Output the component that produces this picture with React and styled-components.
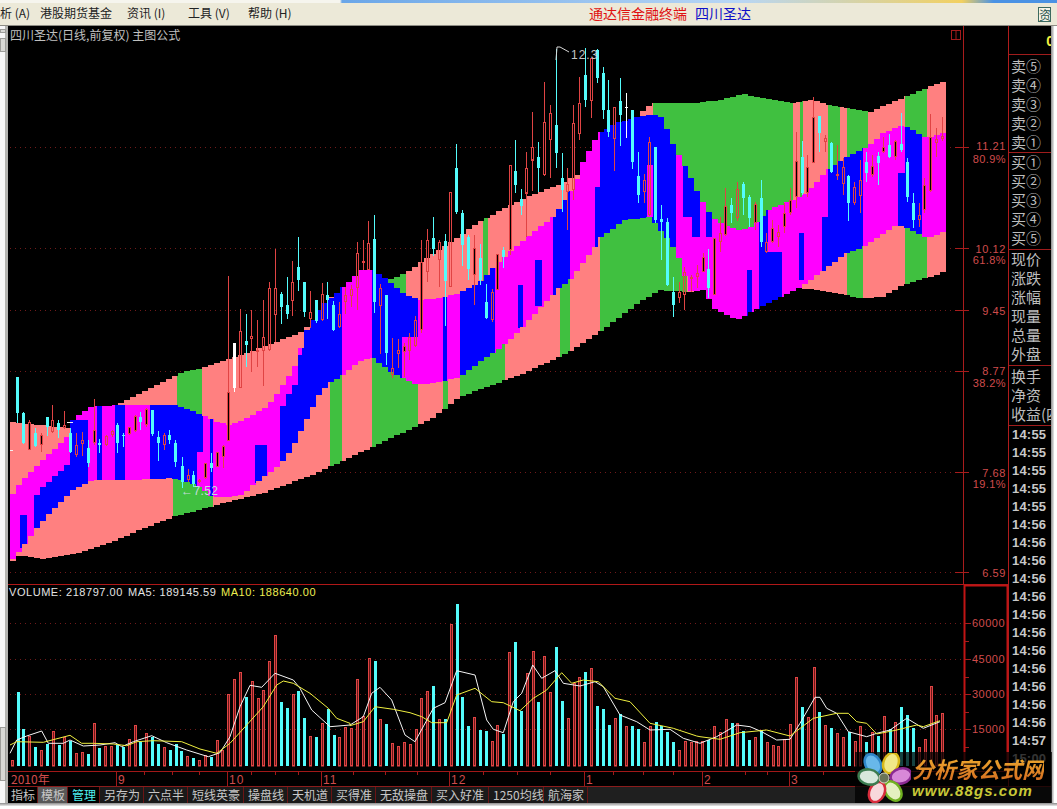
import React from 'react'
import styled, { createGlobalStyle } from 'styled-components'

const CJK = '"Noto Sans CJK SC", "Liberation Sans", sans-serif'
const LATIN = '"Liberation Sans", "Noto Sans CJK SC", sans-serif'

const SALMON = '#ff8080'
const GREEN = '#40c040'
const BLUE = '#0000ff'
const MAGENTA = '#ff00ff'
const RED = '#e04444'
const CYAN = '#54fcfc'
const AXIS = '#a81c1c'
const LABEL = '#d04c4c'

const GlobalStyle = createGlobalStyle`
    html, body {
        margin: 0;
        padding: 0;
        background: #fff;
        overflow: hidden;
    }
`

const Page = styled.div`
    width: 1057px;
    height: 809px;
    display: flex;
    flex-direction: column;
    font-family: ${CJK};
    overflow: hidden;
`

const TitleStrip = styled.div`
    height: 3px;
    background: linear-gradient(90deg, #f6f5ee 0, #f6f5ee 340px, #6aa6e8 342px, #b8d6f4 70%, #f2d060 91%, #4a92e4 94%);
`

const MenuBar = styled.div`
    height: 23px;
    flex: none;
    display: flex;
    align-items: center;
    position: relative;
    box-sizing: border-box;
    padding-bottom: 3px;
    background: #ece9d8;
    border-bottom: 1px solid #8d8c84;
    font-size: 12px;
    color: #222;
`

const MenuItem = styled.span`
    position: absolute;
    left: ${props => props.left}px;
    white-space: nowrap;
`

const Headline = styled.div`
    position: absolute;
    left: 589px;
    display: flex;
    gap: 8px;
    font-size: 14px;
`

const HeadlinePart = styled.span`
    color: ${props => props.color};
`

const InfoButton = styled.div`
    position: absolute;
    left: 1038px;
    top: 4px;
    width: 13px;
    height: 15px;
    border: 1px solid #3c6a60;
    box-sizing: border-box;
    overflow: hidden;
    font-size: 12px;
    line-height: 13px;
    color: #245048;
    background: #f6f4e8;
`

const Workspace = styled.div`
    flex: none;
    height: 777px;
    display: flex;
`

const LeftRail = styled.div`
    width: 5px;
    flex: none;
    background: #f7f7f7;
    border-right: 3px solid #b4b4b0;
    display: flex;
    flex-direction: column;
    align-items: flex-start;
    gap: 3px;
    padding-top: 3px;
`

const RailButton = styled.div`
    width: 6px;
    height: ${props => props.h}px;
    margin-top: ${props => props.top || 0}px;
    background: #d8d8d4;
    border: 1px solid #9c9c98;
    box-sizing: border-box;
`

const RightRail = styled.div`
    width: 3px;
    flex: none;
    background: linear-gradient(90deg, #8c8c8c, #e8e8e8);
`

const Terminal = styled.div`
    width: 1043px;
    flex: none;
    display: flex;
    flex-direction: column;
    background: #000;
    position: relative;
`

const Upper = styled.div`
    height: 760px;
    display: flex;
`

const ChartColumn = styled.div`
    width: 1000px;
    flex: none;
    display: flex;
    flex-direction: column;
`

const ChartSvg = styled.svg`
    display: block;
    flex: none;
`

const InfoColumn = styled.div`
    width: 43px;
    flex: none;
    box-sizing: border-box;
    border-left: 1px solid #b01c1c;
    overflow: hidden;
    color: #bdbdbd;
`

const LastPrice = styled.div`
    height: 28px;
    border-bottom: 1px solid #a01c1c;
    text-align: right;
    font: bold 14px/30px ${LATIN};
    color: #f4f040;
    margin-right: -3px;
`

const QuoteGroup = styled.div`
    padding: ${props => props.pad || '0'};
    border-bottom: 1px solid #a01c1c;
`

const QuoteRow = styled.div`
    height: 19px;
    line-height: 17px;
    font-size: 15px;
    padding-left: 2px;
    white-space: nowrap;
`

const TimeRow = styled.div`
    height: 18px;
    line-height: 18px;
    font: bold 13px/18px ${LATIN};
    padding-left: 3px;
    letter-spacing: .2px;
    color: #c8c8c8;
`

const TabBar = styled.div`
    height: 17px;
    flex: none;
    display: flex;
    background: #1f1f1f;
    border-top: 1px solid #8a1c1c;
    box-sizing: border-box;
    font-size: 12px;
    line-height: 16px;
`

const Tab = styled.div`
    padding: 0 ${props => props.narrow ? 3 : 4}px;
    flex: none;
    color: ${props => props.active ? '#4ff0f0' : '#c8c8c8'};
    background: ${props => props.muted ? '#585858' : props.dark ? '#000' : '#1a1a1a'};
    border-right: 1px solid #6a1414;
    box-sizing: border-box;
    width: ${props => props.w}px;
    white-space: nowrap;
    text-align: center;
`

const BottomEdge = styled.div`
    height: 3px;
    background: linear-gradient(180deg, #8c8c8c, #e8e8e8);
`

const Watermark = styled.div`
    position: absolute;
    left: 847px;
    top: 726px;
    width: 197px;
    height: 51px;
    background: rgba(0, 0, 0, .74);
    display: flex;
    align-items: center;
    padding-left: 2px;
    box-sizing: border-box;
    gap: 1px;
`

const BrandText = styled.div`
    display: flex;
    flex-direction: column;
    font-style: italic;
    font-weight: bold;
`

const BrandName = styled.div`
    font-size: 22px;
    line-height: 27px;
    background: linear-gradient(180deg, #f0b030, #d46a20);
    -webkit-background-clip: text;
    background-clip: text;
    color: transparent;
    white-space: nowrap;
`

const BrandUrl = styled.div`
    font: italic bold 15px/18px ${LATIN};
    letter-spacing: 1.1px;
    color: #c8c838;
`

const interp = (points, x) => {
    if (x <= points[0][0]) return points[0][1]
    for (let i = 1; i < points.length; i++) {
        if (x <= points[i][0]) {
            const [x0, y0] = points[i - 1]
            const [x1, y1] = points[i]
            return y0 + (y1 - y0) * (x - x0) / (x1 - x0)
        }
    }
    return points[points.length - 1][1]
}

const TOP = [[10, 422], [67, 428], [73, 420], [90, 407], [117, 405], [180, 373], [202, 368], [233, 358], [300, 333], [312, 323], [320, 308], [330, 298], [343, 290], [353, 278], [360, 270], [373, 270], [385, 278], [388, 280], [406, 273], [443, 247], [483, 220], [520, 200], [563, 183], [580, 173], [583, 162], [595, 140], [600, 133], [617, 123], [637, 117], [647, 107], [653, 103], [693, 103], [720, 100], [743, 94], [773, 100], [793, 103], [813, 100], [830, 105], [870, 112], [903, 98], [927, 88], [947, 80]]
const UPPER = [[10, 498], [20, 483], [43, 460], [67, 437], [69, 428], [73, 420], [90, 407], [117, 405], [177, 405], [202, 415], [217, 422], [230, 425], [243, 420], [267, 407], [287, 380], [300, 357], [302, 338], [320, 308], [353, 278], [360, 270], [373, 270], [385, 278], [388, 280], [406, 295], [420, 300], [440, 298], [460, 293], [483, 280], [493, 268], [520, 243], [553, 217], [570, 193], [580, 173], [583, 162], [595, 140], [600, 133], [617, 123], [637, 117], [648, 115], [658, 115], [663, 118], [672, 142], [687, 170], [700, 197], [712, 217], [720, 223], [737, 230], [753, 227], [768, 210], [793, 200], [807, 193], [827, 170], [847, 157], [870, 145], [883, 133], [903, 125], [927, 138], [947, 132]]
const LOWER = [[10, 563], [22, 548], [33, 533], [50, 513], [73, 490], [93, 480], [133, 480], [173, 478], [197, 485], [213, 497], [227, 497], [243, 495], [253, 485], [280, 465], [293, 447], [313, 407], [320, 393], [330, 383], [340, 377], [357, 363], [372, 357], [378, 362], [393, 373], [417, 385], [440, 382], [460, 377], [487, 357], [507, 343], [520, 330], [560, 287], [570, 280], [593, 250], [600, 238], [625, 220], [650, 217], [670, 242], [680, 260], [690, 291], [705, 290], [713, 308], [737, 320], [750, 313], [780, 297], [800, 288], [847, 253], [863, 247], [897, 225], [905, 227], [927, 238], [947, 231]]
const BOTTOM = [[10, 563], [20, 555], [43, 559], [57, 557], [83, 552], [117, 540], [140, 530], [173, 517], [213, 506], [267, 492], [317, 473], [430, 420], [460, 397], [487, 387], [520, 375], [570, 352], [607, 327], [640, 302], [660, 290], [687, 292], [705, 290], [713, 308], [737, 320], [750, 313], [780, 297], [800, 288], [820, 290], [860, 298], [883, 297], [903, 285], [930, 277], [947, 271]]

const COL_W = 6
const COLS = Array.from({ length: 156 }, (_, i) => 10 + i * COL_W)

const bandPath = (a, b) => {
    const up = COLS.map(x => `L${x} ${Math.round(interp(a, x + 3))}H${x + COL_W}`).join('')
    const down = [...COLS].reverse().map(x => `L${x + COL_W} ${Math.round(interp(b, x + 3))}H${x}`).join('')
    return `M${up.slice(1)}${down}Z`
}

const TOP_GREEN = [[177, 202], [388, 406], [483, 488], [653, 793], [800, 803], [828, 840], [847, 868], [905, 927]]
const LOW_GREEN = [[173, 213], [330, 342], [372, 418], [443, 448], [460, 505], [560, 570], [600, 687], [847, 863], [905, 927]]

// blue runs inside the middle band, the rest of it is magenta
const MID_BLUE = [[97, 102], [115, 125], [150, 203], [210, 213], [302, 342], [372, 402], [443, 447], [460, 495], [553, 570], [595, 676], [759, 782], [822, 863], [898, 922]]

const PATCHES = [
    [20, 27, 515, 548, BLUE], [197, 203, 452, 600, MAGENTA], [255, 267, 445, 483, BLUE],
    [402, 418, 0, 337, BLUE], [518, 523, 285, 328, BLUE], [535, 542, 260, 306, BLUE],
    [595, 600, 0, 187, MAGENTA], [647, 653, 165, 217, MAGENTA], [683, 692, 0, 217, BLUE],
    [692, 700, 0, 237, BLUE], [706, 712, 0, 237, BLUE], [747, 752, 270, 317, BLUE],
    [768, 782, 0, 252, MAGENTA], [799, 804, 233, 280, BLUE], [822, 828, 0, 217, MAGENTA],
    [898, 905, 0, 173, MAGENTA],
]

const DIAGONALS = [
    { from: 33, to: 90, line: [[33, 500], [43, 487], [67, 465], [68, 420]] },
    { from: 278, to: 302, line: [[278, 418], [287, 397], [295, 385], [302, 350]] },
]

const diagonalPath = ({ from, to, line }) => {
    const cols = COLS.filter(x => x + 3 >= from && x + 3 < to)
    return cols.map(x => `M${x} ${Math.round(interp(line, x + 3))}H${x + COL_W}V600H${x}Z`).join('')
}

const CANDLES = [
    { x0: 0, y0: 340, rows: [
        [52, 'c', 110, 110, 220, 250], [70, 'c', 215, 220, 310, 312], [88, 'd', 240, 245, 330, 330], [106, 'c', 265, 280, 318, 320], [124, 'd', 280, 285, 315, 335], [142, 'c', 232, 232, 262, 288], [157, 'r', 195, 240, 275, 280], [175, 'c', 240, 250, 270, 295], [193, 'r', 213, 255, 265, 268], [211, 'c', 265, 280, 335, 340], [229, 'r', 280, 315, 345, 350], [247, 'r', 275, 300, 312, 348], [265, 'c', 300, 325, 370, 380], [281, 'd', 178, 270, 310, 315], [298, 'c', 298, 310, 315, 340], [317, 'r', 285, 288, 315, 318], [335, 'r', 270, 272, 285, 290], [352, 'c', 248, 255, 310, 340], [370, 'c', 280, 285, 288, 320], [386, 'd', 260, 262, 282, 285], [404, 'd', 225, 228, 272, 275], [421, 'c', 215, 232, 245, 270], [439, 'd', 205, 208, 255, 260], [457, 'c', 210, 210, 283, 288], [475, 'c', 272, 290, 310, 362], [493, 'r', 280, 285, 315, 330], [508, 'c', 270, 285, 300, 312], [526, 'c', 300, 310, 365, 382], [545, 'c', 352, 378, 425, 445], [563, 'r', 388, 405, 420, 425], [580, 'c', 392, 405, 432, 440], [598, 'r', 418, 420, 425, 428], [616, 'd', 370, 370, 415, 418], [632, 'c', 338, 368, 385, 395], [650, 'd', 335, 337, 380, 380], [668, 'd', 315, 318, 352, 385],
    ] },
    { x0: 210, y0: 225, rows: [
        [55, 'd', 152, 500, 648, 648], [73, 'w', 355, 355, 490, 500], [91, 'r', 252, 317, 488, 490], [109, 'c', 268, 348, 360, 425], [124, 'r', 255, 332, 342, 440], [142, 'r', 285, 375, 380, 425], [160, 'r', 225, 335, 378, 482], [178, 'r', 170, 190, 375, 378], [196, 'r', 72, 190, 270, 350], [214, 'c', 200, 207, 245, 297], [232, 'c', 155, 240, 268, 282], [247, 'r', 108, 172, 228, 272], [265, 'c', 36, 125, 165, 197], [283, 'c', 170, 172, 262, 276], [301, 'r', 198, 260, 282, 310], [319, 'c', 225, 225, 288, 293], [337, 'r', 175, 208, 285, 287], [352, 'c', 172, 210, 225, 282], [370, 'c', 228, 240, 315, 318], [388, 'r', 230, 268, 305, 310], [406, 'r', 186, 210, 230, 268], [424, 'r', 180, 192, 212, 245], [442, 'r', 52, 85, 190, 255], [460, 'r', 45, 108, 115, 135], [475, 'r', -12, 55, 135, 135], [493, 'c', -30, 42, 230, 265], [511, 'r', 178, 190, 243, 388], [529, 'c', 210, 210, 385, 420],
    ] },
    { x0: 320, y0: 180, rows: [
        [217, 'r', 475, 565, 585, 595], [235, 'r', 478, 510, 522, 565], [253, 'd', 490, 497, 515, 590], [268, 'r', 460, 472, 512, 540], [286, 'r', 408, 420, 498, 500], [304, 'd', 180, 245, 450, 460], [322, 'r', 148, 180, 275, 305], [340, 'c', 110, 175, 208, 228], [358, 'r', 180, 185, 240, 320], [376, 'c', 163, 183, 303, 438], [391, 'r', 36, 36, 320, 320], [409, 'c', -108, -36, 96, 101], [427, 'c', 90, 99, 195, 258], [445, 'c', 165, 170, 268, 300], [463, 'd', 165, 205, 285, 375], [481, 'c', 192, 235, 300, 315], [499, 'c', 312, 365, 415, 418], [515, 'r', 328, 335, 420, 425], [531, 'd', 222, 222, 330, 330], [549, 'c', 201, 210, 231, 264], [569, 'd', -45, -45, 210, 225], [586, 'c', -120, -27, 15, 39], [604, 'c', 27, 57, 78, 105], [619, 'r', -84, -36, 42, 159], [637, 'r', -204, -99, -60, 33], [655, 'c', -114, -69, -36, 36],
    ] },
    { x0: 520, y0: 30, rows: [
        [127, 'c', 368, 445, 480, 545], [142, 'r', 415, 462, 485, 600], [160, 'r', 225, 280, 480, 510], [178, 'r', 140, 220, 312, 330], [196, 'c', 55, 135, 210, 232], [214, 'r', 85, 85, 212, 265], [232, 'c', 58, 60, 145, 160], [250, 'c', 112, 130, 240, 268], [265, 'c', 150, 240, 305, 320], [283, 'r', 230, 232, 328, 422], [301, 'c', 145, 212, 255, 348], [319, 'w', 190, 232, 235, 325], [337, 'c', 240, 240, 395, 418], [355, 'c', 365, 438, 495, 520], [373, 'r', 432, 450, 485, 518], [388, 'r', 320, 335, 555, 558], [406, 'c', 352, 352, 570, 578], [424, 'c', 525, 568, 575, 690], [442, 'c', 565, 575, 765, 768], [460, 'c', 742, 785, 825, 860], [478, 'r', 755, 785, 805, 820], [493, 'r', 710, 725, 795, 840], [512, 'r', 735, 740, 745, 785], [530, 'r', 705, 730, 742, 775], [548, 'd', 670, 680, 725, 725], [565, 'c', 658, 718, 775, 805], [583, 'd', 625, 625, 795, 795], [601, 'r', 560, 608, 637, 665], [616, 'd', 475, 528, 615, 618], [634, 'c', 505, 525, 548, 580], [652, 'r', 455, 478, 565, 572], [670, 'c', 455, 462, 505, 555], [688, 'c', 495, 500, 565, 590], [706, 'd', 515, 522, 580, 600], [724, 'c', 450, 505, 635, 650], [739, 'r', 610, 635, 665, 670], [757, 'd', 570, 593, 635, 640], [775, 'r', 585, 605, 620, 650], [793, 'd', 520, 550, 590, 610], [811, 'd', 475, 510, 550, 555], [829, 'd', 305, 392, 500, 535], [847, 'c', 332, 382, 490, 495], [862, 'd', 375, 410, 490, 500], [880, 'd', 200, 260, 400, 400], [898, 'c', 258, 258, 310, 365], [916, 'r', 315, 325, 335, 365], [934, 'c', 335, 340, 425, 430], [952, 'r', 345, 432, 438, 450], [970, 'r', 385, 410, 462, 495], [985, 'c', 435, 438, 520, 572], [1003, 'r', 455, 472, 520, 525], [1021, 'r', 390, 450, 497, 550], [1039, 'c', 365, 395, 430, 455], [1057, 'd', 375, 408, 435, 440], [1075, 'c', 365, 378, 400, 465], [1090, 'd', 320, 350, 365, 368], [1108, 'c', 312, 345, 380, 385], [1126, 'd', 330, 332, 380, 390], [1144, 'c', 248, 342, 360, 365], [1162, 'c', 385, 395, 500, 515], [1180, 'c', 490, 520, 570, 595], [1198, 'r', 520, 555, 570, 590], [1213, 'd', 445, 465, 540, 550], [1231, 'd', 252, 322, 482, 485], [1249, 'r', 295, 328, 340, 380], [1267, 'r', 262, 318, 328, 332],
    ] },
]

// rows are read in 3x coordinates of their own crop
const candleData = CANDLES.flatMap(({ x0, y0, rows }) => rows.map(([zx, kind, hi, top, bot, lo]) => ({
    x: Math.round(x0 + zx / 3),
    kind,
    hi: Math.round(y0 + hi / 3),
    top: Math.round(y0 + top / 3),
    bot: Math.round(y0 + bot / 3),
    lo: Math.round(y0 + lo / 3),
})))

candleData.push(
    { x: 532, kind: 'r', hi: 113, top: 147, bot: 161, lo: 168 },
    { x: 526, kind: 'r', hi: 153, top: 168, bot: 193, lo: 237 },
    { x: 538, kind: 'c', hi: 142, top: 157, bot: 168, lo: 192 },
    { x: 521, kind: 'c', hi: 189, top: 199, bot: 206, lo: 215 },
    { x: 515, kind: 'c', hi: 140, top: 171, bot: 185, lo: 193 },
    { x: 503, kind: 'c', hi: 247, top: 250, bot: 257, lo: 268 },
    { x: 544, kind: 'r', hi: 82, top: 122, bot: 175, lo: 176 },
    { x: 550, kind: 'r', hi: 105, top: 113, bot: 140, lo: 178 },
    { x: 556, kind: 'c', hi: 49, top: 125, bot: 153, lo: 168 },
)

const VOL_A = 'r540 c337 c448 r467 c502 r510 c492 r453 c495 r472 c482 r519 r517 c522 r430 c503 r498 r497 c495 c500 r477 r435 c487 r460 c470 c492 r502 c510 c492 c513 r528 c534 r540 r526 c530 r480 r510 r343 r297 r277 c350 r304 r354 r330 r243 r165 c365 c384 r343 c332 c413 r468 c470 r428 c387 c465 r470 r440'
const VOL_B = 'r443 r297 r408 r234 c243 r417 c432 r489 r498 r486 r492 r447 r354 r333 c318 r417 c418 r132 c72 c351 c438 r411 c450 c453 r483 r435 c462 r216 c186 c393 r279 r213 c366 r228 r336 c201 c363 r414 r309 r291 c276 r264 c378 c387 c435 r414 c402 r438 c438 c447 r486 r438 c426 c438 c456 c486 r510 r483 r486 r483'
const VOL_C = 'r483 c480 r438 r456 r417 c429 r429 c453 c480 r471 c450 r486 r495 r498 r477 r432 r291 c381 r411 r261 c396 r435 c444 r459 r471 c456 r483 r438 c486 r456 c468 r408 c447 r426 c381 c405 c444 r501 r477 r318 r405 r399'

const volumeBars = (() => {
    const tokens = `${VOL_A} ${VOL_B} ${VOL_C}`.split(' ')
    const step = (942.3 - 11.7) / (tokens.length - 1)
    return tokens.map((t, i) => ({
        x: Math.round(11.7 + i * step),
        up: t[0] === 'r',
        top: Math.round(580 + Number(t.slice(1)) / 3),
    }))
})()

const scaleLine = (x0, pts) => pts.map(([x, y]) => `${(x0 + x / 3).toFixed(1)},${(580 + y / 3).toFixed(1)}`).join(' ')

const MA5 = [
    scaleLine(0, [[30, 520], [50, 480], [80, 468], [125, 453], [145, 490], [190, 490], [210, 480], [250, 498], [300, 495], [345, 488], [365, 500], [400, 485], [455, 467], [500, 488], [560, 510], [625, 530], [660, 518], [690, 470], [720, 380], [750, 316], [785, 322], [825, 280], [880, 300], [900, 325], [935, 390], [990, 440], [1050, 435]]),
    scaleLine(350, [[0, 435], [40, 410], [65, 340], [90, 322], [125, 360], [165, 465], [195, 485], [250, 385], [285, 368], [320, 272], [375, 285], [410, 420], [430, 448], [460, 458], [490, 365], [515, 340], [548, 255], [575, 295], [615, 272], [640, 310], [690, 318], [735, 305], [760, 320], [810, 405], [860, 425], [900, 450], [960, 448], [1000, 475], [1050, 490]]),
    scaleLine(700, [[0, 490], [50, 470], [110, 435], [150, 440], [185, 455], [230, 480], [270, 478], [300, 430], [345, 352], [360, 352], [380, 385], [410, 400], [445, 455], [500, 470], [530, 460], [570, 450], [620, 415], [670, 445], [720, 425]]),
].join(' ')

const MA10 = [
    scaleLine(0, [[30, 495], [50, 485], [130, 487], [210, 466], [245, 490], [280, 490], [340, 492], [380, 497], [410, 485], [460, 482], [545, 485], [600, 507], [650, 520], [690, 490], [740, 435], [790, 380], [830, 315], [850, 303], [880, 310], [930, 340], [985, 385], [1010, 415], [1050, 430]]),
    scaleLine(350, [[0, 437], [40, 425], [75, 380], [130, 388], [180, 398], [215, 410], [245, 428], [290, 428], [320, 345], [375, 325], [425, 365], [460, 368], [510, 392], [550, 355], [590, 330], [635, 278], [665, 310], [700, 300], [745, 305], [795, 355], [840, 365], [900, 430], [970, 445], [1040, 468]]),
    scaleLine(700, [[0, 470], [60, 478], [120, 458], [200, 450], [270, 468], [340, 415], [410, 400], [445, 400], [470, 425], [500, 430], [530, 462], [590, 450], [650, 435], [670, 440], [720, 422]]),
].join(' ')

const PRICE_LABELS = [
    [147, '11.21', 150, '80.9%', 163], [248, '10.12', 253, '61.8%', 264], [310, '9.45', 315],
    [371, '8.77', 375, '38.2%', 387], [472, '7.68', 477, '19.1%', 488], [572, '6.59', 577],
]

const Candle = ({ x, kind, hi, top, bot, lo }) => {
    const wick = kind === 'c' ? CYAN : kind === 'w' ? '#fff' : RED
    const solid = kind === 'c' || kind === 'w'
    return (
        <g>
            <line x1={x + .5} x2={x + .5} y1={hi} y2={top} stroke={wick} />
            <line x1={x + .5} x2={x + .5} y1={bot} y2={lo} stroke={wick} />
            {solid
                ? <rect x={x - 1} y={top} width={3} height={Math.max(bot - top, 1)} fill={wick} />
                : <rect x={x - .5} y={top + .5} width={2} height={Math.max(bot - top - 1, 1)} fill={kind === 'd' ? '#000' : 'none'} stroke={RED} />}
        </g>
    )
}

const PricePanel = () => (
    <ChartSvg width="1000" height="559" viewBox="8 26 1000 559">
        <defs>
            <clipPath id="band-top"><path d={bandPath(TOP, UPPER)} /></clipPath>
            <clipPath id="band-mid"><path d={bandPath(UPPER, LOWER)} /></clipPath>
            <clipPath id="band-low"><path d={bandPath(LOWER, BOTTOM)} /></clipPath>
        </defs>
        {PRICE_LABELS.map(([y]) => (
            <line key={y} x1="10" x2="955" y1={y + .5} y2={y + .5} stroke="#701a1a" strokeDasharray="1 4" />
        ))}
        <g clipPath="url(#band-top)">
            <rect x="10" y="26" width="940" height="559" fill={SALMON} />
            {TOP_GREEN.map(([a, b]) => <rect key={a} x={a} y="26" width={b - a} height="559" fill={GREEN} />)}
        </g>
        <g clipPath="url(#band-low)">
            <rect x="10" y="26" width="940" height="559" fill={SALMON} />
            {LOW_GREEN.map(([a, b]) => <rect key={a} x={a} y="26" width={b - a} height="559" fill={GREEN} />)}
        </g>
        <g clipPath="url(#band-mid)">
            <rect x="10" y="26" width="940" height="559" fill={MAGENTA} />
            {MID_BLUE.map(([a, b]) => <rect key={a} x={a} y="26" width={b - a} height="559" fill={BLUE} />)}
            {DIAGONALS.map(d => <path key={d.from} d={diagonalPath(d)} fill={BLUE} />)}
            {PATCHES.map(([a, b, y0, y1, c]) => <rect key={a} x={a} y={y0} width={b - a} height={y1 - y0} fill={c} />)}
        </g>
        {candleData.map(c => <Candle key={`${c.x}-${c.hi}`} {...c} />)}
        <line x1="10" x2="13" y1="450.5" y2="450.5" stroke="#f0f0f0" />
        <line x1="67" x2="73" y1="422.5" y2="422.5" stroke="#f0f0f0" />
        <text x="10" y="40" fill="#c0c0c0" fontSize="12" fontFamily={CJK}>四川圣达(日线,前复权) 主图公式</text>
        <polyline points="556,60 557,47 560,47 569,52" fill="none" stroke="#d8d8d8" />
        <text x="571" y="59" fill="#c4c4c4" fontSize="12" letterSpacing="1" fontFamily={LATIN}>12.3</text>
        <text x="181" y="495" fill="#c4dcdc" fontSize="12" letterSpacing=".4" fontFamily={LATIN}>←7.52</text>
        <rect x="951.5" y="30.5" width="9" height="9" fill="none" stroke="#a01c1c" />
        <line x1="956" x2="956" y1="31" y2="39" stroke="#a01c1c" />
        <line x1="963.5" x2="963.5" y1="26" y2="585" stroke={AXIS} />
        {PRICE_LABELS.map(([y, value, valueY, pct, pctY]) => (
            <g key={value}>
                <line x1="955" x2="969" y1={y + .5} y2={y + .5} stroke={AXIS} />
                <text x="1006" y={valueY} textAnchor="end" fill={LABEL} fontSize="11" letterSpacing=".6" fontFamily={LATIN}>{value}</text>
                {pct && <text x="1006" y={pctY} textAnchor="end" fill={LABEL} fontSize="11" letterSpacing=".4" fontFamily={LATIN}>{pct}</text>}
            </g>
        ))}
        <line x1="8" x2="1008" y1="584.5" y2="584.5" stroke="#b01818" />
    </ChartSvg>
)

const VOLUME_LABELS = [[623, '60000'], [659, '45000'], [694, '30000'], [729, '15000']]
const VOLUME_MINOR = [641, 677, 712, 747]

const VolumePanel = () => (
    <ChartSvg width="1000" height="186" viewBox="8 585 1000 186">
        {VOLUME_LABELS.map(([y]) => (
            <line key={y} x1="10" x2="963" y1={y + .5} y2={y + .5} stroke="#701a1a" strokeDasharray="1 4" />
        ))}
        {volumeBars.map(b => b.up
            ? <rect key={b.x} x={b.x - .5} y={b.top + .5} width="2" height={765.5 - b.top} fill="#6a1818" stroke={RED} />
            : <rect key={b.x} x={b.x - 1} y={b.top} width="3" height={766 - b.top} fill={CYAN} />)}
        <polyline points={MA5} fill="none" stroke="#f4f4f4" />
        <polyline points={MA10} fill="none" stroke="#f0f040" />
        <text y="596" fontSize="11" letterSpacing=".55" fontFamily={LATIN}>
            <tspan x="9" fill="#e4e4e4">VOLUME: 218797.00</tspan>
            <tspan x="128" fill="#e4e4e4">MA5: 189145.59</tspan>
            <tspan x="221" fill="#eeee50">MA10: 188640.00</tspan>
        </text>
        <path d="M964.5 771V585.5H1007.5V771" fill="none" stroke="#c01414" strokeWidth="2" />
        {VOLUME_LABELS.map(([y, value]) => (
            <g key={y}>
                <line x1="965" x2="971" y1={y + .5} y2={y + .5} stroke={AXIS} />
                <text x="1005" y={y + 4} textAnchor="end" fill={LABEL} fontSize="11" letterSpacing=".5" fontFamily={LATIN}>{value}</text>
            </g>
        ))}
        {VOLUME_MINOR.map(y => <line key={y} x1="965" x2="969" y1={y + .5} y2={y + .5} stroke={AXIS} />)}
    </ChartSvg>
)

const MONTHS = [[116, '9'], [227, '10'], [321, '11'], [449, '12'], [584, '1'], [702, '2'], [789, '3']]
const DAY_TICKS = [144, 172, 199, 251, 275, 298, 353, 385, 417, 483, 517, 550, 613, 643, 673, 745, 767, 823, 857]

const DateAxis = () => (
    <ChartSvg width="1000" height="15" viewBox="8 771 1000 15">
        <line x1="8" x2="1008" y1="771.5" y2="771.5" stroke="#a01818" />
        {MONTHS.map(([x]) => <line key={x} x1={x + .5} x2={x + .5} y1="771" y2="786" stroke="#a01818" />)}
        {DAY_TICKS.map(x => <line key={x} x1={x + .5} x2={x + .5} y1="771" y2="775" stroke="#a01818" />)}
        <text x="11" y="784" fill={LABEL} fontSize="12" fontFamily={CJK}>2010年</text>
        {MONTHS.map(([x, label]) => (
            <text key={label} x={x + 2} y="784" fill={LABEL} fontSize="12" letterSpacing="1" fontFamily={LATIN}>{label}</text>
        ))}
    </ChartSvg>
)

const Flower = () => (
    <svg width="54" height="50" viewBox="-27 -25 54 50">
        {[
            [-11, -14, -30, '#2f86c8', '#68b8ea'],
            [7, -15, 20, '#d8b818', '#f0e888'],
            [17, -2, 75, '#8a2a92', '#d888d8'],
            [9, 13, 145, '#70b020', '#e4f0c0'],
            [-7, 14, 205, '#d82c3c', '#f8d8dc'],
            [-15, -1, 280, '#3c7c50', '#d8e8dc'],
        ].map(([cx, cy, rot, edge, fill]) => (
            <ellipse key={rot} cx={cx} cy={cy} rx="7.5" ry="10.5" transform={`rotate(${rot} ${cx} ${cy})`} fill={fill} stroke={edge} strokeWidth="2.5" />
        ))}
        <circle r="5" fill="#6a7458" stroke="#d8d8c8" />
    </svg>
)

const MENU = [[0, '析 (A)'], [40, '港股期货基金'], [127, '资讯 (I)'], [188, '工具 (V)'], [248, '帮助 (H)']]
const SELLS = ['卖⑤', '卖④', '卖③', '卖②', '卖①']
const BUYS = ['买①', '买②', '买③', '买④', '买⑤']
const FIELDS = ['现价', '涨跌', '涨幅', '现量', '总量', '外盘']
const EXTRAS = ['换手', '净资', '收益(四)']
const TIMES = [...Array(5).fill('14:55'), ...Array(12).fill('14:56'), '14:57', '15:00']
const TABS = [
    { label: '指标', w: 30, narrow: true, dark: true },
    { label: '模板', w: 30, narrow: true, muted: true },
    { label: '管理', w: 32, active: true, dark: true },
    { label: '另存为', w: 44 },
    { label: '六点半', w: 44 },
    { label: '短线英豪', w: 56 },
    { label: '操盘线', w: 44 },
    { label: '天机道', w: 44 },
    { label: '买得准', w: 44 },
    { label: '无敌操盘', w: 56 },
    { label: '买入好准', w: 57 },
    { label: '1250均线', w: 55 },
    { label: '航海家', w: 44 },
]

const App = () => (
    <Page>
        <GlobalStyle />
        <TitleStrip />
        <MenuBar>
            {MENU.map(([left, label]) => <MenuItem key={label} left={left}>{label}</MenuItem>)}
            <Headline>
                <HeadlinePart color="#e01010">通达信金融终端</HeadlinePart>
                <HeadlinePart color="#1010c8">四川圣达</HeadlinePart>
            </Headline>
            <InfoButton>资</InfoButton>
        </MenuBar>
        <Workspace>
            <LeftRail>
                <RailButton h={4} />
                <RailButton h={14} top={2} />
                <RailButton h={54} top={672} />
            </LeftRail>
            <Terminal>
                <Upper>
                    <ChartColumn>
                        <PricePanel />
                        <VolumePanel />
                        <DateAxis />
                    </ChartColumn>
                    <InfoColumn>
                        <LastPrice>0</LastPrice>
                        <QuoteGroup pad="2px 0 0">
                            {SELLS.map(t => <QuoteRow key={t}>{t}</QuoteRow>)}
                        </QuoteGroup>
                        <QuoteGroup pad="0 0 1px">
                            {BUYS.map(t => <QuoteRow key={t}>{t}</QuoteRow>)}
                        </QuoteGroup>
                        <QuoteGroup pad="0 0 1px">
                            {FIELDS.map(t => <QuoteRow key={t}>{t}</QuoteRow>)}
                        </QuoteGroup>
                        <QuoteGroup pad="1px 0 1px">
                            {EXTRAS.map(t => <QuoteRow key={t}>{t}</QuoteRow>)}
                        </QuoteGroup>
                        {TIMES.map((t, i) => <TimeRow key={i}>{t}</TimeRow>)}
                    </InfoColumn>
                </Upper>
                <TabBar>
                    {TABS.map(t => <Tab key={t.label} {...t}>{t.label}</Tab>)}
                </TabBar>
                <Watermark>
                    <Flower />
                    <BrandText>
                        <BrandName>分析家公式网</BrandName>
                        <BrandUrl>www.88gs.com</BrandUrl>
                    </BrandText>
                </Watermark>
            </Terminal>
            <RightRail />
        </Workspace>
        <BottomEdge />
    </Page>
)

export default App
